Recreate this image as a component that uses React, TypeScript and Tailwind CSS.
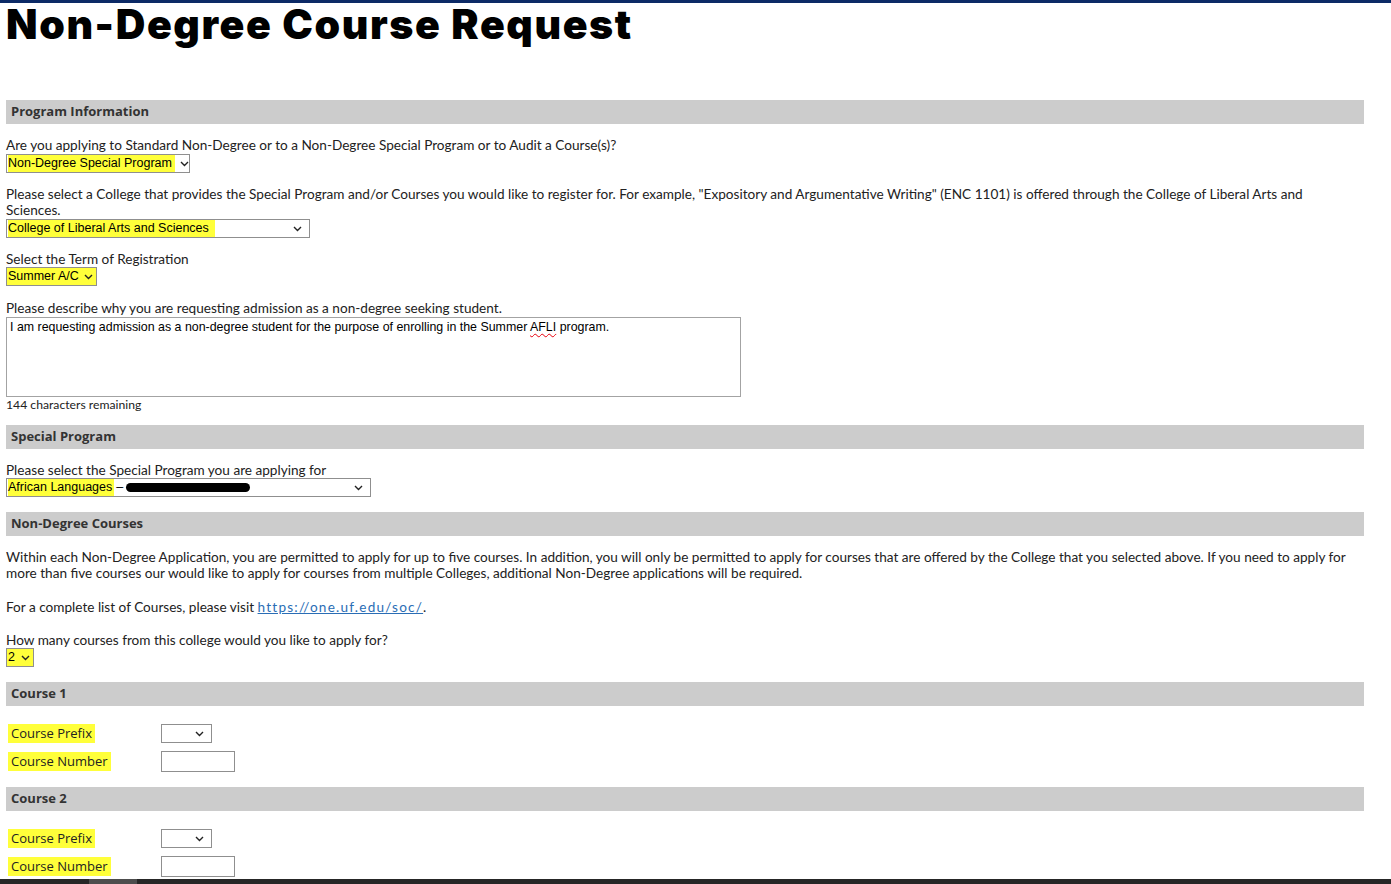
import React from "react";

const body = { fontFamily: "Lato, 'Open Sans', sans-serif" };
const ctrl = { fontFamily: "'Liberation Sans', Arial, sans-serif" };
const head = { fontFamily: "'Open Sans', Lato, sans-serif" };

function Chevron() {
  return (
    <svg width="9" height="6" viewBox="0 0 9 6" className="shrink-0">
      <path d="M1 1 L4.5 4.5 L8 1" fill="none" stroke="#222" strokeWidth="1.4" />
    </svg>
  );
}

function Hl({ children, className = "" }: { children: React.ReactNode; className?: string }) {
  return <span className={"bg-[#ffff3a] " + className}>{children}</span>;
}

function Select({
  w,
  children,
  className = "",
  yellow = false,
}: {
  w: string;
  children?: React.ReactNode;
  className?: string;
  yellow?: boolean;
}) {
  return (
    <div
      className={
        "flex h-[19px] items-center justify-between gap-[5px] border border-[#8f8f8f] pl-[1px] pr-[7px] text-[12.5px] leading-[17px] text-black " +
        (yellow ? "bg-[#ffff3a] " : "bg-white ") +
        w +
        " " +
        className
      }
      style={ctrl}
    >
      <div className="flex items-center whitespace-nowrap">{children}</div>
      <Chevron />
    </div>
  );
}

function Header({ children, className = "" }: { children: React.ReactNode; className?: string }) {
  return (
    <div
      className={"flex h-[24px] items-center bg-[#cccccc] pl-[5px] text-[13px] font-bold text-[#333] " + className}
      style={head}
    >
      {children}
    </div>
  );
}

function Label({ children, className = "" }: { children: React.ReactNode; className?: string }) {
  return <div className={"text-[13.6px] leading-[16px] text-[#222] " + className}>{children}</div>;
}

function CourseBlock({ n, top }: { n: number; top: string }) {
  return (
    <>
      <Header className={top}>Course {n}</Header>
      <div className="mt-[18px] flex h-[19px] items-center" style={head}>
        <div className="flex w-[155px] pl-[2px]">
          <Hl className="px-[3px] text-[13px] leading-[19px] text-[#222]">Course Prefix</Hl>
        </div>
        <Select w="w-[51px]" />
      </div>
      <div className="mt-[8px] flex h-[21px] items-center" style={head}>
        <div className="flex w-[155px] pl-[2px]">
          <Hl className="px-[3px] text-[13px] leading-[19px] text-[#222]">Course Number</Hl>
        </div>
        <div className="h-[21px] w-[74px] border border-[#8f8f8f] bg-white" />
      </div>
    </>
  );
}

export default function App() {
  return (
    <div className="relative h-[884px] w-[1391px] overflow-hidden bg-white" style={body}>
      <div className="relative z-10 h-[3px] bg-[#0c2a66]" />
      <div className="ml-[6px] w-[1358px]">
        <h1
          className="-mt-[3px] whitespace-nowrap text-[41px] font-black leading-[48px] tracking-[1.6px] text-black"
          style={{ fontFamily: "Inter, 'Open Sans', sans-serif" }}
        >
          Non-Degree Course Request
        </h1>

        <Header className="mt-[52px]">Program Information</Header>

        <Label className="mt-[13px]">
          Are you applying to Standard Non-Degree or to a Non-Degree Special Program or to Audit a Course(s)?
        </Label>
        <Select w="w-[184px]" className="mt-[1px]">
          <Hl className="pr-[3px]">Non-Degree Special Program</Hl>
        </Select>

        <Label className="mt-[13px]">
          Please select a College that provides the Special Program and/or Courses you would like to register for. For
          example, "Expository and Argumentative Writing" (ENC 1101) is offered through the College of Liberal Arts and
          <br />
          Sciences.
        </Label>
        <Select w="w-[304px]" className="mt-[1px]">
          <Hl className="pr-[6px]">College of Liberal Arts and Sciences</Hl>
        </Select>

        <Label className="mt-[13px]">Select the Term of Registration</Label>
        <Select w="w-[91px]" yellow>
          <span>Summer A/C</span>
        </Select>

        <Label className="mt-[14px]">Please describe why you are requesting admission as a non-degree seeking student.</Label>
        <div
          className="mt-[1px] h-[80px] w-[735px] border border-[#a3a3a3] bg-white px-[3px] pt-[1px] text-[12.4px] leading-[16px] text-black"
          style={ctrl}
        >
          I am requesting admission as a non-degree student for the purpose of enrolling in the Summer{" "}
          <span className="underline decoration-red-600 decoration-wavy decoration-[1px] underline-offset-2">AFLI</span>{" "}
          program.
        </div>
        <div className="text-[12.2px] leading-[15px] text-[#222]">144 characters remaining</div>

        <Header className="mt-[13px]">Special Program</Header>

        <Label className="mt-[13px]">Please select the Special Program you are applying for</Label>
        <Select w="w-[365px]">
          <Hl className="pr-[2px]">African Languages</Hl>
          <span className="ml-[2px]">–</span>
          <span className="relative ml-[3px] inline-block h-[9px] w-[124px] rounded-full bg-black" />
        </Select>

        <Header className="mt-[15px]">Non-Degree Courses</Header>

        <Label className="mt-[13px]">
          Within each Non-Degree Application, you are permitted to apply for up to five courses. In addition, you will only
          be permitted to apply for courses that are offered by the College that you selected above. If you need to apply for
          <br />
          more than five courses our would like to apply for courses from multiple Colleges, additional Non-Degree
          applications will be required.
        </Label>

        <Label className="mt-[18px]">
          For a complete list of Courses, please visit{" "}
          <a className="tracking-[1.2px] text-[#2a6db5] underline" href="#">
            https://one.uf.edu/soc/
          </a>
          .
        </Label>

        <Label className="mt-[17px]">How many courses from this college would you like to apply for?</Label>
        <Select w="w-[28px]" yellow className="!gap-[3px] !pr-[3px]">
          <span>2</span>
        </Select>

        <CourseBlock n={1} top="mt-[15px]" />
        <CourseBlock n={2} top="mt-[15px]" />
      </div>
      <div className="absolute bottom-0 left-0 flex h-[5px] w-full bg-[#262626]">
        <div className="ml-[89px] w-[48px] bg-[#4d4d4d]" />
      </div>
    </div>
  );
}
